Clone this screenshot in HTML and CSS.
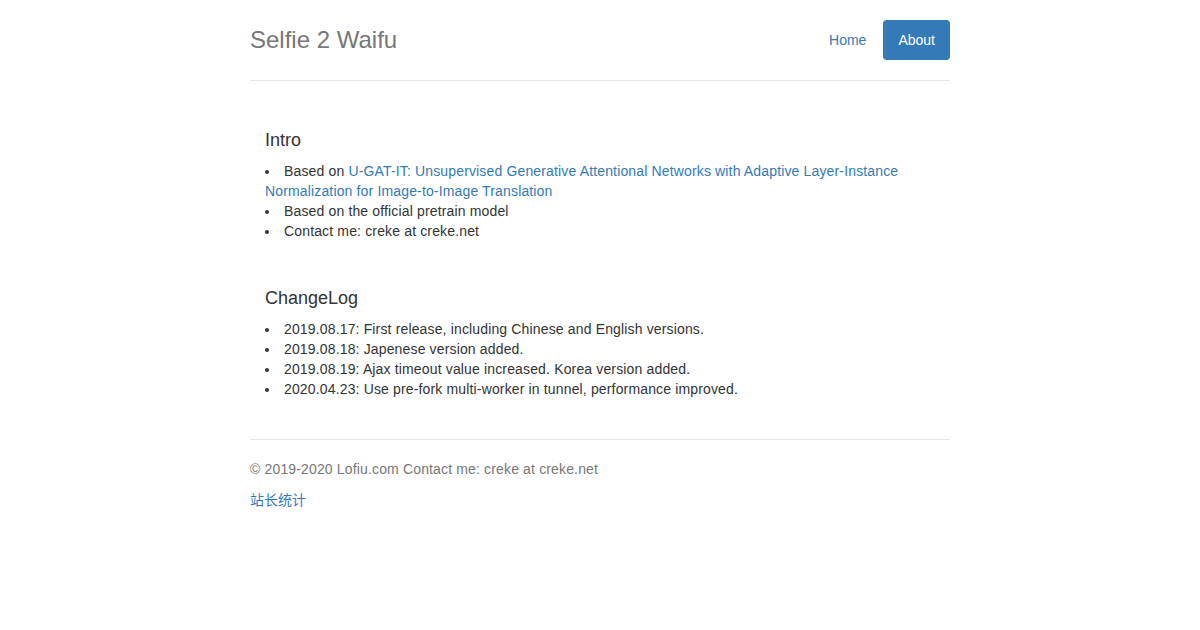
FILE: index.html
```html
<!DOCTYPE html>
<html lang="en">
<head>
    <meta charset="UTF-8">
    <meta name="viewport" content="width=device-width, initial-scale=1.0">
    <title>Selfie 2 Waifu - About</title>
    <link rel="stylesheet" href="styles.css">
</head>
<body>
    <div class="container">
        <div class="header">
            <h3 class="site-title">Selfie 2 Waifu</h3>
            <ul class="nav-pills">
                <li><a href="#">Home</a></li>
                <li class="active"><a href="#">About</a></li>
            </ul>
        </div>

        <div class="marketing">
            <div class="section">
                <h4>Intro</h4>
                <ul>
                    <li>Based on <a href="#">U-GAT-IT: Unsupervised Generative Attentional Networks with Adaptive Layer-Instance Normalization for Image-to-Image Translation</a></li>
                    <li>Based on the official pretrain model</li>
                    <li>Contact me: creke at creke.net</li>
                </ul>
            </div>
            <div class="section">
                <h4>ChangeLog</h4>
                <ul>
                    <li>2019.08.17: First release, including Chinese and English versions.</li>
                    <li>2019.08.18: Japenese version added.</li>
                    <li>2019.08.19: Ajax timeout value increased. Korea version added.</li>
                    <li>2020.04.23: Use pre-fork multi-worker in tunnel, performance improved.</li>
                </ul>
            </div>
        </div>

        <footer class="footer">
            <p>&copy; 2019-2020 Lofiu.com Contact me: creke at creke.net</p>
            <p><a href="#" class="cn">站长统计</a></p>
        </footer>
    </div>
</body>
</html>
```

FILE: styles.css
```css
body {
    margin: 0;
    padding: 20px 0;
    font-family: "Liberation Sans", Arial, "Noto Sans CJK SC", sans-serif;
    font-size: 14px;
    line-height: 20px;
    color: #333;
    background: #fff;
}
a {
    color: #337ab7;
    text-decoration: none;
}
.container {
    width: 700px;
    margin: 0 auto;
}
.header {
    display: flex;
    justify-content: space-between;
    align-items: center;
    padding-bottom: 20px;
    border-bottom: 1px solid #e5e5e5;
}
.site-title {
    margin: 0;
    font-size: 24px;
    font-weight: 500;
    line-height: 40px;
    color: #777;
}
.nav-pills {
    display: flex;
    list-style: none;
    margin: 0;
    padding: 0;
}
.nav-pills li + li {
    margin-left: 2px;
}
.nav-pills a {
    display: block;
    padding: 10px 15px;
    border-radius: 4px;
}
.nav-pills .active a {
    background-color: #337ab7;
    color: #fff;
}
.marketing {
    margin: 50px 0 40px;
    padding: 0 15px;
}
.section + .section {
    margin-top: 48px;
}
.marketing h4 {
    margin: 10px 0;
    font-size: 18px;
    font-weight: 500;
    line-height: 1.1;
}
.marketing ul {
    margin: 0 0 10px;
    padding: 0;
    list-style: disc inside;
    letter-spacing: 0.15px;
}
.footer {
    padding-top: 19px;
    color: #777;
    border-top: 1px solid #e5e5e5;
    letter-spacing: 0.15px;
}
.footer p {
    margin: 0 0 10px;
}
.cn {
    font-family: "Noto Sans CJK SC", sans-serif;
    letter-spacing: 0;
}
```
